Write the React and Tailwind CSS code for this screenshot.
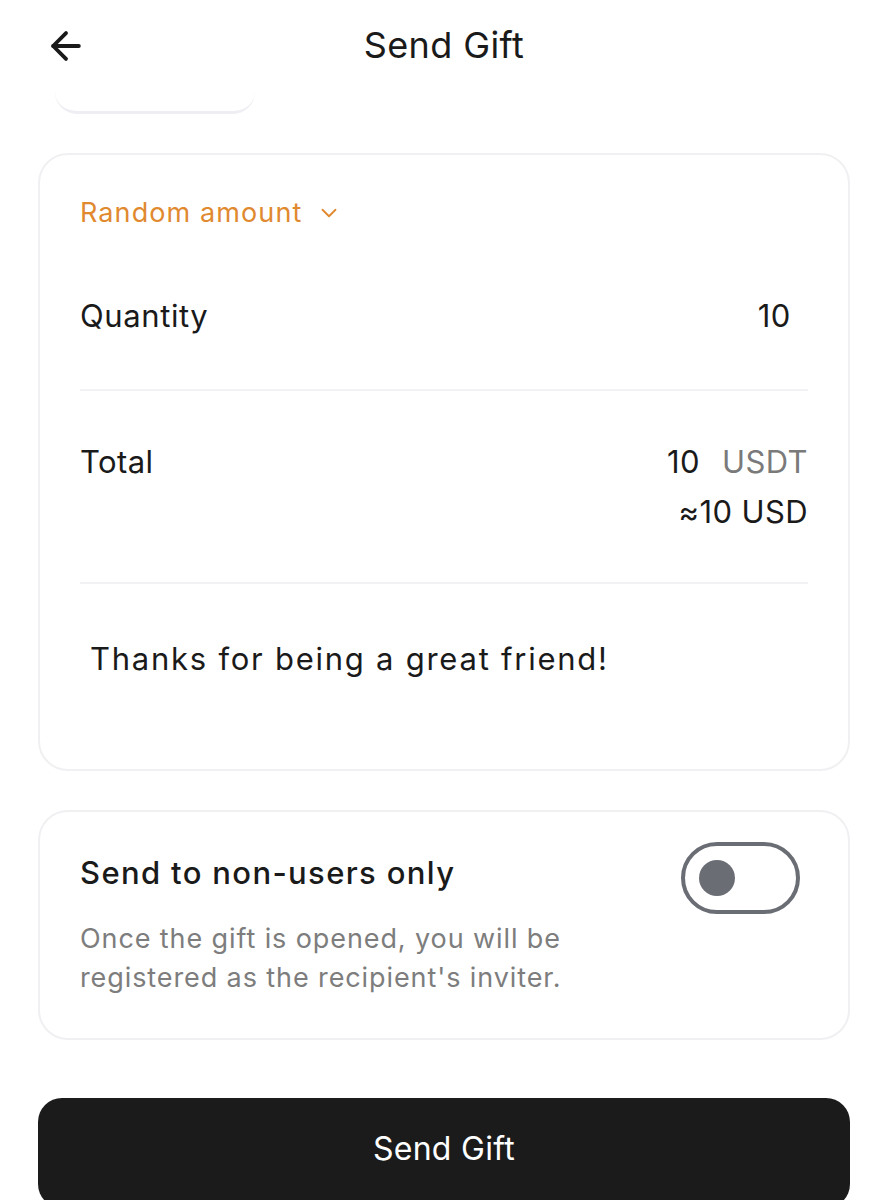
import { ArrowLeft, ChevronDown } from 'lucide-react'

export default function App() {
  return (
    <div className="relative h-[1200px] w-[888px] overflow-hidden bg-white font-['Inter','Noto_Sans',sans-serif] text-[#1a1a1a]">
      <header className="relative flex h-[90px] items-center justify-center">
        <button className="absolute left-[44px] top-[24px] text-[#1a1a1a]">
          <ArrowLeft className="h-[44px] w-[44px]" strokeWidth={2.1} />
        </button>
        <h1 className="text-[36px] font-normal tracking-[0.4px]">Send Gift</h1>
      </header>

      <div className="mx-[55px] -mt-[20px] h-[44px] w-[200px] rounded-b-[22px] border-b-[3px] border-[#eeeef3]" />

      <div className="mx-[38px] mt-[39px] rounded-[30px] border-2 border-[#f0f0f3] px-[40px] pb-[90px] pt-[38px]">
        <div className="flex h-[40px] items-center gap-[14px] text-[27px] tracking-[1.1px] text-[#e0892f]">
          Random amount
          <ChevronDown className="h-[26px] w-[26px]" strokeWidth={1.7} />
        </div>

        <div className="mt-[63px] flex h-[40px] items-center justify-between text-[31px] tracking-[0.6px]">
          <span>Quantity</span>
          <span className="mr-[17px]">10</span>
        </div>
        <div className="mt-[53px] h-[2px] bg-[#f2f2f4]" />

        <div className="flex items-start justify-between pb-[50px] pt-[51px] text-[31px] tracking-[0.4px]">
          <span className="leading-[40px]">Total</span>
          <div className="flex flex-col items-end">
            <div className="leading-[40px]">
              10<span className="ml-[22px] text-[#7a7a7a]">USDT</span>
            </div>
            <div className="mt-[10px] leading-[40px]">≈10 USD</div>
          </div>
        </div>
        <div className="h-[2px] bg-[#f2f2f4]" />

        <div className="mt-[55px] h-[40px] pl-[10px] text-[31px] leading-[40px] tracking-[1.75px]">Thanks for being a great friend!</div>
      </div>

      <div className="mx-[38px] mt-[39px] flex justify-between rounded-[30px] border-2 border-[#f0f0f3] pb-[41px] pl-[40px] pr-[48px] pt-[39px]">
        <div>
          <div className="text-[31px] font-medium leading-[44px] tracking-[1.35px]">Send to non-users only</div>
          <p className="mt-[24px] text-[27px] leading-[39px] tracking-[0.9px] text-[#7d7d7d]">
            Once the gift is opened, you will be
            <br />
            registered as the recipient's inviter.
          </p>
        </div>
        <div className="-mt-[9px] flex h-[72px] w-[119px] shrink-0 items-center rounded-full border-[4px] border-[#6b6d75] px-[14px]">
          <div className="h-[36px] w-[36px] rounded-full bg-[#6b6d75]" />
        </div>
      </div>

      <button className="mx-[38px] mt-[58px] flex h-[110px] w-[812px] items-start justify-center rounded-[24px] bg-[#1b1b1b] pt-[31px] text-[32px] leading-[40px] tracking-[0.3px] text-white">
        Send Gift
      </button>
    </div>
  )
}
